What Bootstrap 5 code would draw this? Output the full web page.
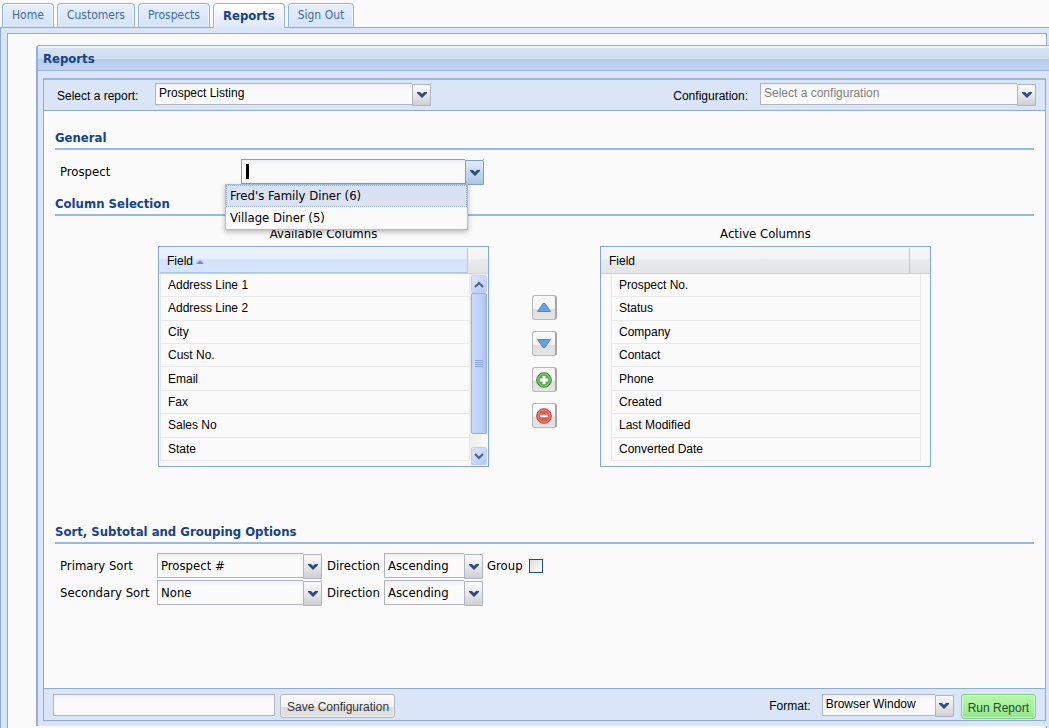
<!DOCTYPE html>
<html lang="en">
<head>
<meta charset="utf-8">
<meta name="viewport" content="width=device-width, initial-scale=1">
<title>Reports</title>
<link href="https://cdn.jsdelivr.net/npm/bootstrap@5.3.0/dist/css/bootstrap.min.css" rel="stylesheet">
<style>
  :root { --line: #8db2e3; --edge: #8eabd3; --frame: #dae6f7; --paper: #fafafa; --ink: #15428b; }
  body { background: var(--paper); color: #000; font: 12px/20px "Liberation Sans", Arial, sans-serif; min-height: 100vh; overflow-x: hidden; }
  .ui-font { font-family: "DejaVu Sans Condensed", "DejaVu Sans", sans-serif; }
  .plain-font { font-family: "Liberation Sans", Arial, sans-serif; }

  /* tabs */
  .tab-strip { gap: 3px; padding: 3px 2px 0; height: 27px; }
  .tab-strip .nav-link { height: 24px; padding: 0 9px; border: 1px solid var(--line); border-bottom: 0; border-radius: 4px 4px 0 0; color: #416aa3; font-size: 12px; line-height: 23px; background: linear-gradient(#e6f0fc, #d5e3f5); box-shadow: inset 1px 1px #fff9, inset -1px 0 #fff9; }
  .tab-strip .nav-link.active { height: 25px; color: var(--ink); font-size: 13px; font-weight: bold; background: linear-gradient(#fff, #dce8f7); position: relative; z-index: 1; }

  /* frames */
  .shell { background: var(--frame); border-top: 1px solid var(--edge); border-left: 1px solid var(--edge); padding: 5px 2px 0 6px; }
  .shell-inner { background: var(--paper); border: 1px solid var(--edge); border-bottom: 0; padding: 11px 0 2px 28px; }
  .report-panel { margin-right: -3px; background: var(--frame); border-left: 2px solid #8fb0de; border-top: 1px solid var(--edge); border-radius: 3px 0 0 0; padding: 0 3px 5px 0; }
  .panel-title { margin: 0 -3px 7px 0; height: 25px; padding-left: 5px; color: var(--ink); font-size: 13px; font-weight: bold; line-height: 26px; border-bottom: 1px solid #99b5de; background: linear-gradient(#edf4fa 0, #edf4fa 2px, #d6e3f0 2px, #cddcf0 13px, #b5cbea 13px, #c3d6f0 100%); }
  .report-body { margin-left: 5px; border: 1px solid var(--edge); border-top: 2px solid #99b7df; background: var(--paper); }
  .bar { background: var(--frame); }
  .bar-top { height: 31px; border-bottom: 1px solid var(--edge); padding: 3px 9px 0 13px; }
  .bar-top label { padding-top: 3px; }
  .bar-bottom { height: 32px; border-top: 1px solid var(--edge); padding: 5px 9px 0 9px; }
  .bar-bottom label { padding-top: 2px; }
  .bar .combo { --back: var(--frame); }
  .content-area { padding: 17px 11px 0; }
  .section-title { margin: 0; height: 22px; font-size: 13px; font-weight: bold; line-height: 20px; color: var(--ink); border-bottom: 2px solid #99b7df; }
  .sort-title { margin-top: 55px; }
  .field-row { height: 25px; padding-left: 5px; font-size: 13px; line-height: 25px; }
  .lead-row { margin: 9px 0 10px; }
  .sort-row { margin-top: 9px; }
  .second-row { margin-top: 2px; }
  .name-report { width: 98px; }
  .name-wide { width: 181px; }
  .name-narrow { width: 97px; }
  .name-dir { width: 62px; padding-left: 5px; }

  /* combo boxes */
  .combo { --back: var(--paper); position: relative; height: 22px; }
  .combo-tall { height: 25px; }
  .field { display: block; width: 100%; height: 100%; padding: 0 20px 2px 3px; border: 1px solid #b0b4c0; border-radius: 0; background: linear-gradient(#eeeff0, var(--paper) 5px); color: #000; appearance: none; font: inherit; line-height: 18px; outline: 0; }
  .combo-tall .field { padding-bottom: 0; }
  .field.hint { color: #808080; }
  .trigger { position: absolute; right: 0; top: 1px; width: 19px; height: 100%; padding: 0; display: flex; align-items: center; justify-content: center; border: 1px solid #b0b4c0; border-radius: 0 2px 0 0; background: linear-gradient(#fafafa, #e8e8ea 50%, #cfcfd1); box-shadow: 0 -1px var(--back); pointer-events: none; }
  .focused .field { border-color: #7ba4cd; background: linear-gradient(#e9edef, var(--paper) 5px); }
  .focused .trigger { border-color: #7ba4cd; background: linear-gradient(#e3edf8, #c5d8f0 50%, #abc5e8); pointer-events: auto; }
  .caret { position: absolute; left: 5px; top: 5px; width: 3px; height: 15px; background: #000; }
  .choices { position: absolute; left: -16px; top: 25px; width: 243px; z-index: 5; padding: 0; margin: 0; list-style: none; background: var(--paper); border: 1px solid #9bbfe0; box-shadow: 0 2px 5px #0004; }
  .choices li { height: 22px; padding-left: 3px; line-height: 20px; border: 1px solid transparent; }
  .choices .picked { background: #dae2f2; border: 1px dotted #93afe0; }
  .w-prospect { width: 243px; }
  .w-report { width: 276px; }
  .w-config { width: 276px; margin-left: 12px; }
  .w-sort { width: 165px; }
  .w-dir { width: 99px; }
  .w-format { width: 132px; margin: 0 7px 0 11px; }
  .w-name { width: 222px; }

  /* column picker */
  .picker { padding: 8px 103px 0; gap: 43px; }
  .pick-col { flex: 1 1 0; min-width: 0; }
  .pick-label { height: 22px; font-size: 13px; line-height: 20px; text-align: center; }
  .grid-box { height: 221px; border: 1px solid #85a6d8; background: var(--paper); }
  .grid-head { height: 27px; padding: 1px 0 0 1px; border-bottom: 1px solid #d0d0d0; background: linear-gradient(#f6f6f6 0, #f3f3f4 12px, #e9eaec 12px, #e3e4e6 100%); line-height: 27px; }
  .grid-head span:first-child { flex: 1; padding-left: 7px; border-right: 1px solid #c5c5c5; }
  .grid-head .spare { width: 20px; }
  .grid-head .sorted { background: linear-gradient(#ebf3fb 0, #e5effa 11px, #d4e3f8 11px, #d6e5f9 100%); border-right-color: #aac8ee; border-bottom: 1px solid #aac8ee; }
  .grid-body { height: 192px; padding-left: 1px; }
  .inset-rows { padding: 0 9px 0 10px; }
  .grid-rows { width: 100%; height: 187px; border-collapse: collapse; }
  .grid-rows td { padding: 0 0 0 7px; border: 1px solid #e9e9e9; border-top: 0; line-height: 18px; }
  .scroller { width: 18px; background: linear-gradient(90deg, #eeeee8, #fbfbf8); padding: 1px; }
  .scroller button { height: 18px; padding: 0; border: 1px solid #c0cffa; border-radius: 2px; background: linear-gradient(135deg, #dce6ff, #b4c8f8); display: flex; align-items: center; justify-content: center; }
  .scroller .thumb { height: 141px; border: 1px solid #93afe8; border-radius: 2px; background: linear-gradient(90deg, #cbdafd, #bccdfb 70%, #aabff4); display: flex; align-items: center; justify-content: center; }
  .tools { width: 25px; padding-top: 71px; gap: 11px; }
  .tool-btn { width: 25px; height: 25px; padding: 0; border: 1px solid #b8b8b8; border-right: 2px solid #a5a5a5; border-radius: 3px; background: linear-gradient(#fafafa, #f3f3f3 55%, #dedede 56%, #e5e5e5); display: flex; align-items: center; justify-content: center; }

  /* buttons */
  .push { height: 24px; padding: 2px 5px 0 6px; border: 1px solid #b4b4b4; border-radius: 3px; color: #333; font: inherit; line-height: 20px; background: linear-gradient(#fafafa, #f0f0f0 55%, #dadada 56%, #e2e2e2); box-shadow: inset 0 0 0 1px #fff8; }
  .push-save { margin-left: 5px; }
  .push-run { height: 25px; padding-right: 6px; border-color: #83cf7d; background: linear-gradient(#b5f8ab, #a5f19c 50%, #97e38f); color: #264d26; }
  .group-check { appearance: none; width: 14px; height: 14px; margin: 0 0 0 6px; border: 1px solid #1c5180; border-radius: 0; background: linear-gradient(135deg, #dcdcd7, #fff); }
  .group-check:checked { background: #1c5180; }
</style>
</head>
<body class="d-flex flex-column">
<nav class="nav tab-strip ui-font flex-nowrap" aria-label="Main">
  <a class="nav-link" href="#">Home</a>
  <a class="nav-link" href="#">Customers</a>
  <a class="nav-link" href="#">Prospects</a>
  <a class="nav-link active" aria-current="page" href="#">Reports</a>
  <a class="nav-link" href="#">Sign Out</a>
</nav>
<svg class="d-none" aria-hidden="true">
  <symbol id="chev" viewBox="0 0 10 6"><path d="M0 0h3l2 2 2-2h3v1L5 6 0 1z" fill="#2c4a86"/></symbol>
</svg>
<div class="shell flex-grow-1 d-flex">
 <div class="shell-inner flex-grow-1 d-flex">
  <main class="report-panel flex-grow-1 d-flex flex-column">
   <h1 class="panel-title ui-font">Reports</h1>
   <div class="report-body flex-grow-1 d-flex flex-column">
    <div class="bar bar-top d-flex">
      <label for="report" class="name-report">Select a report:</label>
      <div class="combo w-report">
        <select id="report" class="field"><option>Prospect Listing</option></select>
        <span class="trigger"><svg width="10" height="6"><use href="#chev"/></svg></span>
      </div>
      <label for="config" class="ms-auto">Configuration:</label>
      <div class="combo w-config">
        <select id="config" class="field hint"><option>Select a configuration</option></select>
        <span class="trigger"><svg width="10" height="6"><use href="#chev"/></svg></span>
      </div>
    </div>
    <div class="content-area ui-font flex-grow-1">
      <h2 class="section-title">General</h2>
      <div class="field-row d-flex lead-row">
        <label for="prospect" class="name-wide">Prospect</label>
        <div class="combo combo-tall focused w-prospect">
          <input id="prospect" class="field" type="text" autocomplete="off">
          <span class="caret"></span>
          <button type="button" class="trigger" aria-label="Show prospects"><svg width="10" height="6"><use href="#chev"/></svg></button>
          <ul class="choices">
            <li class="picked">Fred's Family Diner (6)</li>
            <li>Village Diner (5)</li>
          </ul>
        </div>
      </div>
      <h2 class="section-title">Column Selection</h2>
      <div class="picker d-flex">
        <div class="pick-col">
          <div class="pick-label">Available Columns</div>
          <div class="grid-box plain-font">
            <div class="grid-head d-flex"><span class="sorted">Field <svg width="8" height="4" viewBox="0 0 8 4" class="align-middle"><path d="M4 0l4 4H0z" fill="#6a8fc8"/></svg></span><span class="spare"></span></div>
            <div class="grid-body d-flex">
              <div class="flex-grow-1">
              <table class="grid-rows" aria-label="Available columns"><tbody>
                <tr><td>Address Line 1</td></tr><tr><td>Address Line 2</td></tr><tr><td>City</td></tr><tr><td>Cust No.</td></tr>
                <tr><td>Email</td></tr><tr><td>Fax</td></tr><tr><td>Sales No</td></tr><tr><td>State</td></tr>
              </tbody></table>
              </div>
              <div class="scroller d-flex flex-column">
                <button type="button" aria-label="Scroll up"><svg width="10" height="7" viewBox="0 0 10 7"><path d="M1 6l4-4 4 4" fill="none" stroke="#4d6185" stroke-width="2"/></svg></button>
                <div class="thumb"><svg width="8" height="8" viewBox="0 0 8 8"><path d="M0 .5h8M0 2.500h8M0 4.500h8M0 6.500h8" stroke="#8ba5e6"/></svg></div>
                <button type="button" class="mt-auto" aria-label="Scroll down"><svg width="10" height="7" viewBox="0 0 10 7"><path d="M1 1l4 4 4-4" fill="none" stroke="#4d6185" stroke-width="2"/></svg></button>
              </div>
            </div>
          </div>
        </div>
        <div class="tools d-flex flex-column">
          <button type="button" class="tool-btn" aria-label="Move up"><svg width="14" height="9" viewBox="0 0 14 9"><path d="M6 .5h2L13.5 8.500H.5z" fill="#6b9fe4" stroke="#3f74c6" stroke-width=".8"/></svg></button>
          <button type="button" class="tool-btn" aria-label="Move down"><svg width="14" height="9" viewBox="0 0 14 9"><path d="M.5.5h13L8 8.500H6z" fill="#6b9fe4" stroke="#3f74c6" stroke-width=".8"/></svg></button>
          <button type="button" class="tool-btn" aria-label="Add column"><svg width="16" height="16" viewBox="0 0 16 16"><circle cx="8" cy="8" r="7.300" fill="#5cab4f" stroke="#35852f"/><circle cx="8" cy="8" r="6" fill="none" stroke="#a5d89c" stroke-width=".8"/><path d="M8 4v8M4 8h8" stroke="#fff" stroke-width="3"/></svg></button>
          <button type="button" class="tool-btn" aria-label="Remove column"><svg width="16" height="16" viewBox="0 0 16 16"><circle cx="8" cy="8" r="7.300" fill="#e2574a" stroke="#c03a30"/><circle cx="8" cy="8" r="6" fill="none" stroke="#f3a198" stroke-width=".8"/><path d="M4 8h8" stroke="#fff" stroke-width="2.500"/></svg></button>
        </div>
        <div class="pick-col">
          <div class="pick-label">Active Columns</div>
          <div class="grid-box plain-font">
            <div class="grid-head d-flex"><span>Field</span><span class="spare"></span></div>
            <div class="inset-rows">
              <table class="grid-rows" aria-label="Active columns"><tbody>
                <tr><td>Prospect No.</td></tr><tr><td>Status</td></tr><tr><td>Company</td></tr><tr><td>Contact</td></tr>
                <tr><td>Phone</td></tr><tr><td>Created</td></tr><tr><td>Last Modified</td></tr><tr><td>Converted Date</td></tr>
              </tbody></table>
            </div>
          </div>
        </div>
      </div>
      <h2 class="section-title sort-title">Sort, Subtotal and Grouping Options</h2>
      <div class="field-row d-flex sort-row">
        <label for="sort1" class="name-narrow">Primary Sort</label>
        <div class="combo combo-tall w-sort"><select id="sort1" class="field"><option>Prospect #</option></select><span class="trigger"><svg width="10" height="6"><use href="#chev"/></svg></span></div>
        <label for="dir1" class="name-dir">Direction</label>
        <div class="combo combo-tall w-dir"><select id="dir1" class="field"><option>Ascending</option><option>Descending</option></select><span class="trigger"><svg width="10" height="6"><use href="#chev"/></svg></span></div>
        <label for="group" class="ms-1">Group</label>
        <input id="group" type="checkbox" class="group-check align-self-center">
      </div>
      <div class="field-row d-flex second-row">
        <label for="sort2" class="name-narrow">Secondary Sort</label>
        <div class="combo combo-tall w-sort"><select id="sort2" class="field"><option>None</option></select><span class="trigger"><svg width="10" height="6"><use href="#chev"/></svg></span></div>
        <label for="dir2" class="name-dir">Direction</label>
        <div class="combo combo-tall w-dir"><select id="dir2" class="field"><option>Ascending</option><option>Descending</option></select><span class="trigger"><svg width="10" height="6"><use href="#chev"/></svg></span></div>
      </div>
    </div>
    <div class="bar bar-bottom d-flex">
      <div class="combo w-name"><input class="field" type="text" aria-label="Configuration name"></div>
      <button type="button" class="push push-save">Save Configuration</button>
      <label for="format" class="ms-auto">Format:</label>
      <div class="combo w-format"><select id="format" class="field"><option>Browser Window</option></select><span class="trigger"><svg width="10" height="6"><use href="#chev"/></svg></span></div>
      <button type="button" class="push push-run">Run Report</button>
    </div>
   </div>
  </main>
 </div>
</div>
<script src="https://cdn.jsdelivr.net/npm/bootstrap@5.3.0/dist/js/bootstrap.bundle.min.js"></script>
</body>
</html>
